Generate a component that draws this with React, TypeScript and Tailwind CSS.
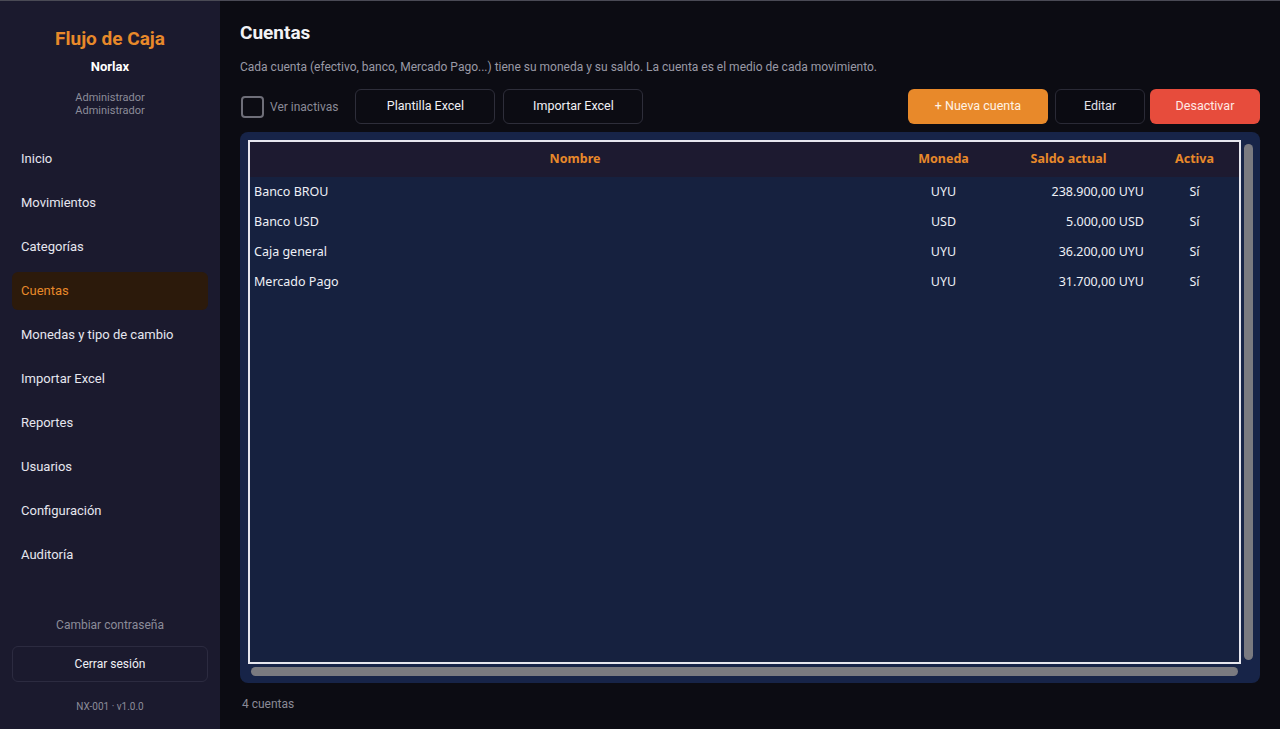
import { useState } from 'react'

const NAV = [
  'Inicio',
  'Movimientos',
  'Categorías',
  'Cuentas',
  'Monedas y tipo de cambio',
  'Importar Excel',
  'Reportes',
  'Usuarios',
  'Configuración',
  'Auditoría',
]

const ROWS = [
  { nombre: 'Banco BROU', moneda: 'UYU', saldo: '238.900,00 UYU', activa: 'Sí' },
  { nombre: 'Banco USD', moneda: 'USD', saldo: '5.000,00 USD', activa: 'Sí' },
  { nombre: 'Caja general', moneda: 'UYU', saldo: '36.200,00 UYU', activa: 'Sí' },
  { nombre: 'Mercado Pago', moneda: 'UYU', saldo: '31.700,00 UYU', activa: 'Sí' },
]

export default function App() {
  const [active] = useState('Cuentas')

  return (
    <div className="flex h-[729px] w-[1280px] overflow-hidden border-t border-[#4a4a55] bg-[#0c0c13] font-['Roboto',sans-serif]">
      {/* Sidebar */}
      <aside className="flex w-[220px] shrink-0 flex-col bg-[#1b1a2e]">
        <div className="pt-[25px] text-center">
          <div className="text-[19px] font-bold leading-[26px] text-[#e8892a]">Flujo de Caja</div>
          <div className="mt-[6px] text-[13px] font-bold leading-[18px] text-white">Norlax</div>
          <div className="mt-[15px] text-[11px] leading-[13px] text-[#8c8c99]">
            Administrador
            <br />
            Administrador
          </div>
        </div>

        <nav className="mt-[23px] flex flex-col gap-[6px] px-[12px]">
          {NAV.map((n) => (
            <div
              key={n}
              className={
                n === active
                  ? 'flex h-[38px] items-center rounded-md bg-[#2c1a0b] px-[9px] text-[13px] text-[#e8892a]'
                  : 'flex h-[38px] items-center rounded-md px-[9px] text-[13px] text-[#e6e6ee]'
              }
            >
              {n}
            </div>
          ))}
        </nav>

        <div className="mt-auto px-[12px] pb-[15px] text-center">
          <div className="text-[12px] text-[#8c8c99]">Cambiar contraseña</div>
          <div className="mt-[12px] flex h-[36px] items-center justify-center rounded-md border border-[#2c2b40] text-[12px] text-[#f0f0f5]">
            Cerrar sesión
          </div>
          <div className="mt-[17px] text-[10px] text-[#8c8c99]">NX-001 · v1.0.0</div>
        </div>
      </aside>

      {/* Main */}
      <main className="flex flex-1 flex-col px-[20px] pt-[20px]">
        <h1 className="text-[19px] font-bold leading-[24px] text-[#f2f2f5]">Cuentas</h1>
        <p className="mt-[15px] text-[12px] leading-[14px] text-[#9a9aa6]">
          Cada cuenta (efectivo, banco, Mercado Pago...) tiene su moneda y su saldo. La cuenta es el medio de cada movimiento.
        </p>

        <div className="mt-[15px] flex h-[35px] items-center">
          <div className="ml-[1px] h-[22px] w-[23px] rounded-[4px] border-2 border-[#6e6e78]" />
          <span className="ml-[6px] text-[12px] text-[#8a8a96]">Ver inactivas</span>
          <button className="ml-[17px] h-[35px] w-[140px] rounded-md border border-[#2e2e3a] text-[12.5px] text-[#f0f0f5]">
            Plantilla Excel
          </button>
          <button className="ml-[8px] h-[35px] w-[140px] rounded-md border border-[#2e2e3a] text-[12.5px] text-[#f0f0f5]">
            Importar Excel
          </button>
          <div className="flex-1" />
          <button className="h-[35px] w-[140px] rounded-md bg-[#e8892a] text-[12.5px] text-[#fff3e6]">
            + Nueva cuenta
          </button>
          <button className="ml-[7px] h-[35px] w-[90px] rounded-md border border-[#2a2a36] bg-[#0b0b12] text-[12.5px] text-[#e0e0e8]">
            Editar
          </button>
          <button className="ml-[5px] h-[35px] w-[110px] rounded-md bg-[#e74c3c] text-[12.5px] text-[#ffe9e6]">
            Desactivar
          </button>
        </div>

        {/* Table card */}
        <div className="mt-[8px] flex h-[551px] flex-col rounded-lg bg-[#172448] p-[8px] pb-[7px] pr-[7px]">
          <div className="flex min-h-0 flex-1 gap-[3px]">
            <div className="flex-1 border-2 border-[#e6e6ee] bg-[#16213f] font-['Noto_Sans',sans-serif] text-[12.5px] text-[#eef0f6]">
              <div className="flex h-[35px] items-center bg-[#1d1a30] font-bold text-[#e8892a]">
                <div className="w-[650px] text-center">Nombre</div>
                <div className="w-[87px] text-center">Moneda</div>
                <div className="w-[163px] text-center">Saldo actual</div>
                <div className="flex-1 text-center">Activa</div>
              </div>
              {ROWS.map((r) => (
                <div key={r.nombre} className="flex h-[30px] items-center">
                  <div className="w-[650px] pl-[4px]">{r.nombre}</div>
                  <div className="w-[87px] text-center">{r.moneda}</div>
                  <div className="w-[163px] pr-[6px] text-right">{r.saldo}</div>
                  <div className="flex-1 text-center">{r.activa}</div>
                </div>
              ))}
            </div>
            <div className="w-[9px] py-[4px]">
              <div className="h-full rounded-full bg-[#7a7a80]" />
            </div>
          </div>
          <div className="mt-[3px] flex h-[9px] pl-[3px] pr-[15px]">
            <div className="h-full flex-1 rounded-full bg-[#7a7a80]" />
          </div>
        </div>

        <div className="mt-[12px] pl-[2px] text-[12px] text-[#8a8a96]">4 cuentas</div>
      </main>
    </div>
  )
}
